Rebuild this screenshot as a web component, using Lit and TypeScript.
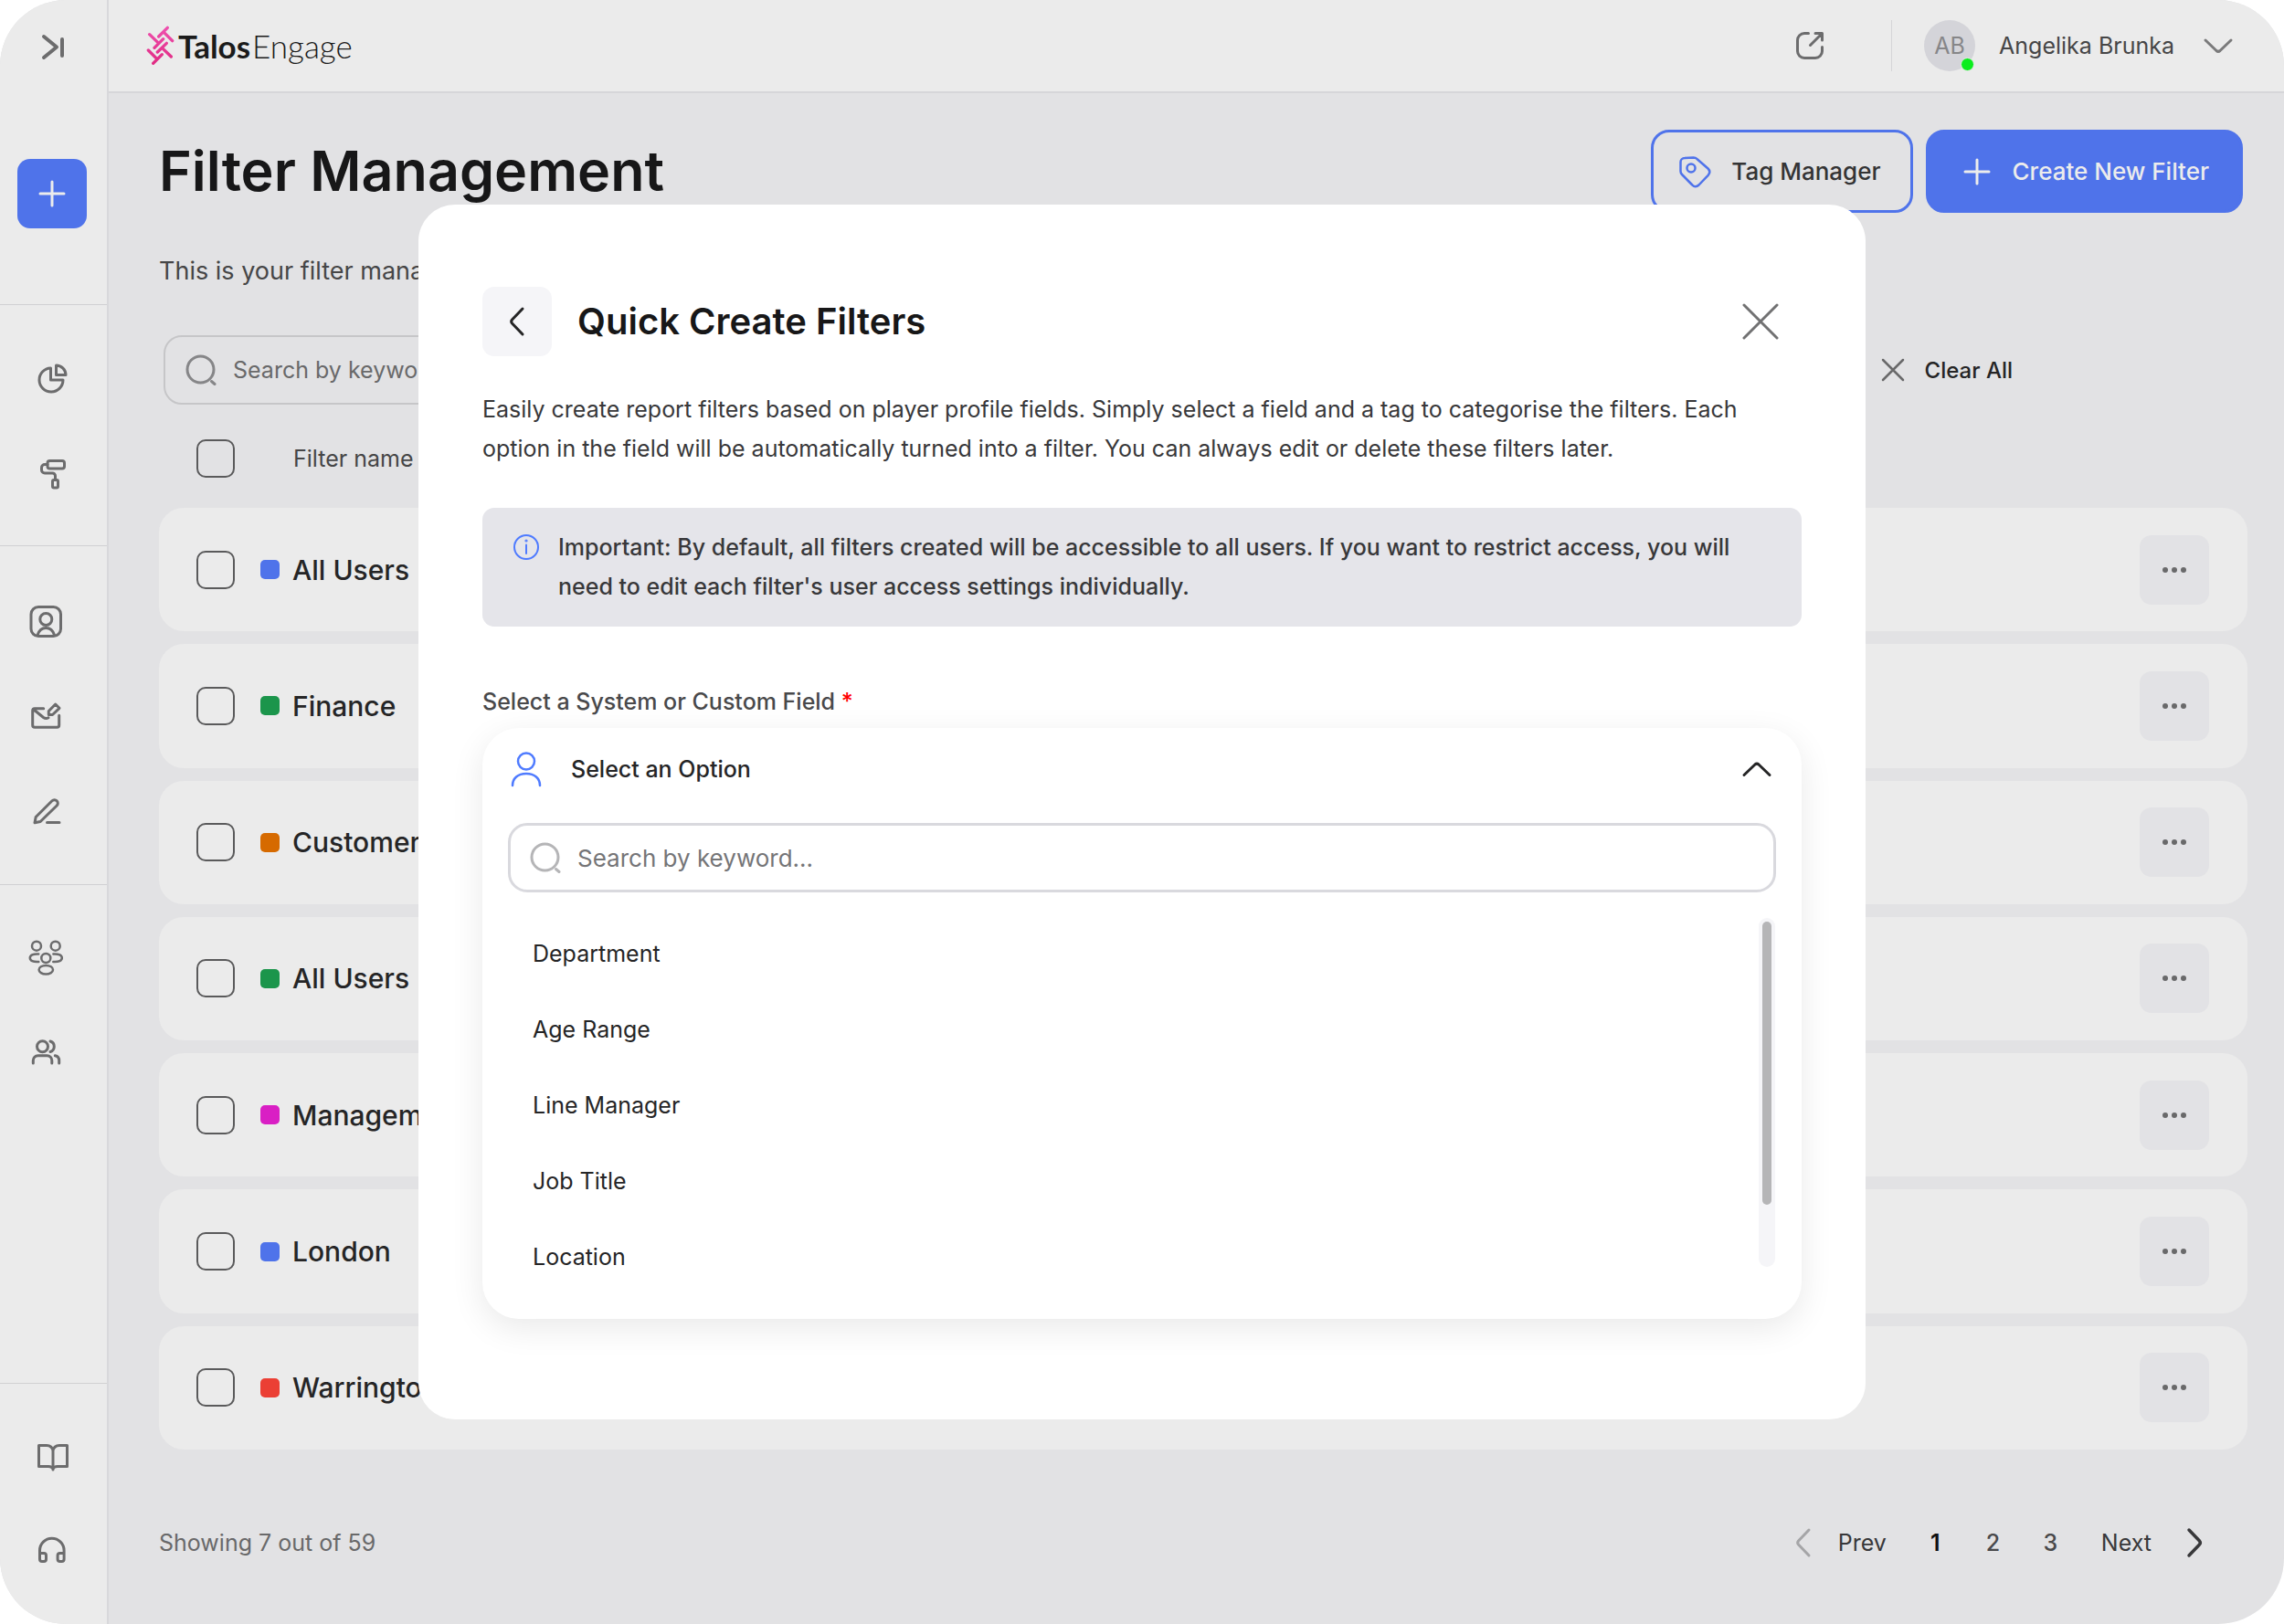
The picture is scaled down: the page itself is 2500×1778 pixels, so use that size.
import { LitElement, html, svg, css, TemplateResult, SVGTemplateResult } from "lit";
import { customElement, property, state } from "lit/decorators.js";
import { classMap } from "lit/directives/class-map.js";

interface IconDef {
  w: number;
  h: number;
  stroke: number;
  body: SVGTemplateResult;
}

const icons: Record<string, IconDef> = {
  collapse: { w: 40, h: 40, stroke: 4, body: svg`<path d="M11 8 25 19.500 11 31M31 11V29"/>` },
  plus: { w: 30, h: 30, stroke: 3, body: svg`<path d="M15 2V28M2 15H28"/>` },
  pie: {
    w: 40, h: 40, stroke: 3,
    body: svg`<path d="M18.5 9A13 13 0 1 0 32 22H18.5Z"/><path d="M24.5 6v10.500H35A10.500 10.500 0 0 0 24.500 6Z"/>`,
  },
  roller: {
    w: 40, h: 40, stroke: 3,
    body: svg`<rect x="15" y="6.500" width="18.500" height="8.500" rx="2.500"/><path d="M15 10.500H12a3.500 3.500 0 0 0-3.500 3.500v2.500a3.500 3.500 0 0 0 3.500 3.500h8.500a3 3 0 0 1 3 3v4"/><rect x="20.500" y="27.500" width="6" height="8.500" rx="1.500"/>`,
  },
  profile: {
    w: 40, h: 40, stroke: 3,
    body: svg`<rect x="4" y="4.500" width="32.500" height="32" rx="8"/><circle cx="20.300" cy="18" r="6.500"/><path d="M11 35.500c1.500-5 5-8 9.300-8s7.800 3 9.300 8"/>`,
  },
  mail: {
    w: 40, h: 40, stroke: 3,
    body: svg`<path d="M17.700 11.700H8a2.300 2.300 0 0 0-2.300 2.300V30A2.300 2.300 0 0 0 8 32.300H32.400A2.300 2.300 0 0 0 34.700 30V19.300M6.500 12.500 17.500 21.500c2 1.500 3.500 1.500 5.500.3M30.700 7 35 11.300 27.500 18.500H23.300V14.500Z"/>`,
  },
  pen: {
    w: 40, h: 40, stroke: 3,
    body: svg`<path d="M8 32.700 9.200 26.500 27 8.800a3.600 3.600 0 0 1 5.200 5.200L14.200 31.500ZM21.500 32.500H35"/>`,
  },
  group: {
    w: 40, h: 40, stroke: 2.5,
    body: svg`<circle cx="10" cy="7.700" r="5"/><circle cx="30.700" cy="7.700" r="5"/><circle cx="20.300" cy="21" r="5"/><ellipse cx="20.300" cy="33.700" rx="7.700" ry="4.800"/><path d="M12.300 16.500C6 16 2.800 18 2.800 20.800S6 25.500 12.300 25M28.300 16.500c6.300-.5 9.500 1.500 9.500 4.300s-3.200 4.700-9.500 4.200"/>`,
  },
  users: {
    w: 40, h: 40, stroke: 3,
    body: svg`<circle cx="16.500" cy="13.700" r="6"/><path d="M25 8a6 6 0 0 1 0 11.500M6.300 32V29a5.300 5.300 0 0 1 5.300-5.300H21.500A5.300 5.300 0 0 1 26.800 29V32M30.300 23.800A5.500 5.500 0 0 1 34.700 29.200V32"/>`,
  },
  book: {
    w: 40, h: 40, stroke: 3,
    body: svg`<path d="M5.500 7.500H14A7 6 0 0 1 21 13.500V34A5 3.500 0 0 0 16 30.500H5.500ZM36.500 7.500H28A7 6 0 0 0 21 13.500V34A5 3.500 0 0 1 26 30.500H36.500Z"/>`,
  },
  headphones: {
    w: 40, h: 40, stroke: 3,
    body: svg`<path d="M6.500 24V20.500a13.300 13.300 0 0 1 26.600 0V24M6.500 23.500h4.500a2.500 2.500 0 0 1 2.500 2.500v4a2.500 2.500 0 0 1-2.500 2.500H9a2.500 2.500 0 0 1-2.500-2.500ZM33.100 23.500h-4.500a2.500 2.500 0 0 0-2.500 2.500v4a2.500 2.500 0 0 0 2.500 2.500h2a2.500 2.500 0 0 0 2.500-2.500Z"/>`,
  },
  external: {
    w: 40, h: 40, stroke: 3,
    body: svg`<path d="M18.500 6.500H14A7.500 7.500 0 0 0 6.500 14V26A7.500 7.500 0 0 0 14 33.500H26A7.500 7.500 0 0 0 33.500 26V21.500M20.500 19.500 33 7M26 6.500H33.500V14"/>`,
  },
  tag: {
    w: 36, h: 36, stroke: 2.5,
    body: svg`<path d="M2.500 7.500A4.500 4.500 0 0 1 7 3L16.500 2.500c1.800 0 3 .6 4.200 1.700L32.500 14.500c2.400 2.400 2.400 4.800.2 7.300L22.500 32.500c-2.400 2.400-5 2.400-7.200 0L4 21c-1-1-1.500-2-1.500-3.400Z"/><circle cx="14" cy="14" r="4.500"/>`,
  },
  close: { w: 40, h: 40, stroke: 3, body: svg`<path d="M2 2 38 38M38 2 2 38"/>` },
  closeSmall: { w: 26, h: 26, stroke: 2.5, body: svg`<path d="M2 2 24 24M24 2 2 24"/>` },
  search: { w: 34, h: 34, stroke: 3, body: svg`<circle cx="16.500" cy="16.500" r="14.500"/><path d="M28.500 29.500 32 32.500"/>` },
  chevronLeft: { w: 20, h: 34, stroke: 3, body: svg`<path d="M16 3 4.500 15c-1 1.200-1 2.800 0 4L16 31"/>` },
  chevronRight: { w: 20, h: 34, stroke: 3.5, body: svg`<path d="M4 3 15.500 15c1 1.200 1 2.800 0 4L4 31"/>` },
  chevronDown: { w: 34, h: 20, stroke: 3, body: svg`<path d="M3 4 15 15.500c1.200 1 2.800 1 4 0L31 4"/>` },
  chevronUp: { w: 34, h: 20, stroke: 3, body: svg`<path d="M3 16.500 15 5c1.200-1 2.800-1 4 0L31 16.500"/>` },
  info: { w: 30, h: 30, stroke: 2, body: svg`<circle cx="15" cy="15" r="13"/><path d="M15 12.500V22"/><circle cx="15" cy="8" r=".6"/>` },
  user: { w: 36, h: 40, stroke: 2.5, body: svg`<circle cx="17" cy="11.500" r="9"/><path d="M2 38c0-8 6-13 15-13s15 5 15 13"/>` },
  dots: {
    w: 30, h: 10, stroke: 0,
    body: svg`<g fill="currentColor"><circle cx="5" cy="5" r="3"/><circle cx="15" cy="5" r="3"/><circle cx="25" cy="5" r="3"/></g>`,
  },
};

function icon(name: string): TemplateResult {
  const i = icons[name];
  return html`<svg class="icon" width=${i.w} height=${i.h} viewBox="0 0 ${i.w} ${i.h}" fill="none" stroke="currentColor"
    stroke-width=${i.stroke} stroke-linecap="round" stroke-linejoin="round" aria-hidden="true">${i.body}</svg>`;
}

const base = css`
  * {
    box-sizing: border-box;
  }
  h1, h2, p, ul {
    margin: 0;
    padding: 0;
  }
  ul {
    list-style: none;
  }
  button, input {
    font: inherit;
    color: inherit;
    border: 0;
    background: none;
    padding: 0;
    margin: 0;
  }
  button {
    display: inline-flex;
    align-items: center;
    justify-content: center;
    cursor: pointer;
  }
  .icon {
    display: block;
    flex: none;
  }
`;

@customElement("side-nav")
export class SideNav extends LitElement {
  static styles = [base, css`
    :host {
      display: flex;
      flex-direction: column;
      width: 119px;
      flex: none;
      background: #ebebeb;
      border-right: 2px solid #d8d8db;
      color: #6c6c6d;
    }
    .section {
      display: flex;
      flex-direction: column;
      gap: 64px;
      padding: 60px 39px 59px 37px;
      border-bottom: 1px solid #d0d0d2;
    }
    .top {
      padding: 32px 20px 83px 19px;
      gap: 102px;
    }
    .top .link {
      margin-left: 18px;
    }
    .inset {
      padding: 62px 39px 60px 30px;
    }
    .grow {
      flex: 1;
      padding-top: 59px;
    }
    .last {
      border-bottom: 0;
      gap: 62px;
      padding-bottom: 61px;
    }
    .link {
      width: 40px;
      height: 40px;
    }
    .add {
      width: 76px;
      height: 76px;
      border-radius: 14px;
      background: #4f73ea;
      color: #ececec;
    }
  `];

  private links(items: [string, string][]) {
    return items.map(([name, label]) => html`<button class="link" aria-label=${label}>${icon(name)}</button>`);
  }

  render() {
    return html`
      <div class="section top">
        <button class="link" aria-label="Expand menu">${icon("collapse")}</button>
        <button class="add" aria-label="Create">${icon("plus")}</button>
      </div>
      <div class="section">${this.links([["pie", "Reports"], ["roller", "Branding"]])}</div>
      <div class="section inset">${this.links([["profile", "Profile"], ["mail", "Messages"], ["pen", "Edit"]])}</div>
      <div class="section inset grow">${this.links([["group", "Groups"], ["users", "Users"]])}</div>
      <div class="section last">${this.links([["book", "Guides"], ["headphones", "Support"]])}</div>
    `;
  }
}

@customElement("top-bar")
export class TopBar extends LitElement {
  static styles = [base, css`
    :host {
      display: flex;
      align-items: center;
      justify-content: space-between;
      height: 102px;
      padding: 0 55px 0 41px;
      background: #ebebeb;
      border-bottom: 2px solid #d6d6d9;
    }
    .brand {
      display: flex;
      align-items: center;
      gap: 4px;
      color: #1b1b1b;
      font: 700 35px/44px Lato, sans-serif;
      text-decoration: none;
    }
    .light {
      font-weight: 300;
      margin-left: 2px;
    }
    .right {
      display: flex;
      align-items: center;
      color: #6c6c6d;
    }
    .rule {
      width: 1px;
      height: 56px;
      margin: 0 35px 0 69px;
      background: #d5d5d8;
    }
    .avatar {
      position: relative;
      width: 56px;
      height: 56px;
      border-radius: 50%;
      background: #d4d4d9;
      color: #868688;
      line-height: 56px;
      text-align: center;
    }
    .dot {
      position: absolute;
      right: 1px;
      bottom: 0;
      width: 15px;
      height: 15px;
      border: 1px solid #ebebeb;
      border-radius: 50%;
      background: #0ced1e;
    }
    .user {
      gap: 26px;
      color: #464647;
      font-size: 25px;
    }
    .user > .icon {
      margin-left: 5px;
      color: #7a7a7b;
    }
  `];

  render() {
    return html`
      <a class="brand" href="#home">
        <svg class="icon" width="31" height="44" viewBox="59 54 93 132" fill="none" stroke-width="10" stroke-linecap="round" aria-hidden="true">
          <defs>
            <linearGradient id="pink" gradientUnits="userSpaceOnUse" x1="0" y1="60" x2="0" y2="180">
              <stop offset="0" stop-color="#ee4fae" />
              <stop offset="1" stop-color="#e02a82" />
            </linearGradient>
          </defs>
          <path stroke="url(#pink)" d="M129 61 100 90M117 76 145 104M70 83 100 112M115 98 86 127M82 178 111 149M94 163 66 135M141 156 111 127M96 141 126 112" />
        </svg>
        <span>Talos<span class="light">Engage</span></span>
      </a>
      <div class="right">
        <button aria-label="Open site">${icon("external")}</button>
        <span class="rule"></span>
        <button class="user">
          <span class="avatar">AB<span class="dot"></span></span>
          Angelika Brunka ${icon("chevronDown")}
        </button>
      </div>
    `;
  }
}

interface Filter {
  name: string;
  color: string;
}

@customElement("filter-table")
export class FilterTable extends LitElement {
  @property({ attribute: false }) filters: Filter[] = [];

  static styles = [base, css`
    :host {
      display: flex;
      flex: 1;
    }
    .table, .body {
      display: flex;
      flex-direction: column;
      flex: 1;
    }
    .body {
      gap: 14px;
    }
    .head, .row {
      display: flex;
      align-items: center;
    }
    .head {
      padding: 0 41px;
      margin: 38px 0 33px;
      color: #464647;
      font-size: 25px;
    }
    .row {
      flex: 1;
      min-height: 100px;
      padding: 0 42px 0 41px;
      border-radius: 27px;
      background: #ebebeb;
      font-weight: 500;
      font-size: 30px;
      color: #252526;
    }
    .cell {
      display: flex;
      align-items: center;
      padding: 0;
    }
    .name {
      flex: 1;
      gap: 14px;
      margin-left: 28px;
    }
    .head .name {
      margin-left: 64px;
      font-weight: 400;
    }
    .check {
      appearance: none;
      width: 42px;
      height: 42px;
      border: 2px solid #5a5a5b;
      border-radius: 10px;
    }
    .swatch {
      width: 21px;
      height: 21px;
      border-radius: 5px;
    }
    .more {
      width: 76px;
      height: 76px;
      border-radius: 13px;
      background: #e2e2e5;
      color: #69696a;
    }
  `];

  render() {
    return html`
      <table class="table">
        <thead>
          <tr class="head">
            <th class="cell"><input class="check" type="checkbox" aria-label="Select all filters" /></th>
            <th class="cell name">Filter name</th>
          </tr>
        </thead>
        <tbody class="body">
          ${this.filters.map((f) => html`
            <tr class="row">
              <td class="cell"><input class="check" type="checkbox" aria-label=${f.name} /></td>
              <td class="cell name"><span class="swatch" style="background:${f.color}"></span>${f.name}</td>
              <td class="cell"><button class="more" aria-label="More actions">${icon("dots")}</button></td>
            </tr>`)}
        </tbody>
      </table>
    `;
  }
}

@customElement("quick-create")
export class QuickCreate extends LitElement {
  @state() private open = true;
  private options = ["Department", "Age Range", "Line Manager", "Job Title", "Location"];

  static styles = [base, css`
    :host {
      display: block;
      width: 1584px;
      max-width: 94%;
      padding: 90px 70px 110px;
      border-radius: 40px;
      background: #fff;
      font-size: 25px;
      color: #38383a;
    }
    .head {
      display: flex;
      align-items: center;
      gap: 28px;
    }
    .title {
      flex: 1;
      font-weight: 600;
      font-size: 40px;
      line-height: 48px;
      color: #171718;
    }
    .back {
      width: 76px;
      height: 76px;
      border-radius: 13px;
      background: #f5f5f8;
      color: #252526;
    }
    .close {
      margin-right: 25px;
      color: #717172;
    }
    .intro {
      margin-top: 37px;
      line-height: 43px;
    }
    .notice {
      display: flex;
      gap: 20px;
      margin-top: 43px;
      padding: 22px 60px 22px 33px;
      border-radius: 13px;
      background: #e5e5ea;
      font-weight: 500;
      line-height: 43px;
    }
    .notice .icon {
      margin-top: 6px;
      color: #4f7bff;
    }
    .label {
      display: block;
      margin: 62px 0 9px;
      font-weight: 500;
      line-height: 40px;
      color: #49494b;
    }
    .required {
      color: #ff0000;
    }
    .select {
      padding: 0 28px 26px;
      border-radius: 40px;
      background: #fff;
      box-shadow: 0 10px 36px rgba(0, 0, 0, 0.09);
      color: #252526;
    }
    .current {
      display: flex;
      width: 100%;
      height: 90px;
      padding: 0 4px 0 3px;
      gap: 30px;
      font-weight: 500;
    }
    .current .value {
      flex: 1;
      text-align: left;
    }
    .current .icon:first-child {
      color: #4f7bff;
    }
    .search {
      display: flex;
      align-items: center;
      gap: 18px;
      height: 76px;
      margin: 14px 0 26px;
      padding: 0 21px;
      border: 3px solid #d9d9de;
      border-radius: 21px;
      color: #b5b5b7;
    }
    .field {
      flex: 1;
      min-width: 0;
      font-size: 26px;
      outline: 0;
      color: #38383a;
    }
    .field::placeholder {
      color: #757577;
      opacity: 1;
    }
    .scroller {
      display: flex;
    }
    .options {
      flex: 1;
    }
    .option {
      padding-left: 27px;
      line-height: 83px;
    }
    .track {
      width: 18px;
      margin: 2px 1px 31px;
      padding: 4px;
      border-radius: 9px;
      background: #f5f5f8;
    }
    .thumb {
      height: 83%;
      border-radius: 5px;
      background: #b5b5b7;
    }
  `];

  render() {
    return html`
      <div class="head">
        <button class="back" aria-label="Back">${icon("chevronLeft")}</button>
        <h2 class="title">Quick Create Filters</h2>
        <button class="close" aria-label="Close">${icon("close")}</button>
      </div>
      <p class="intro">Easily create report filters based on player profile fields. Simply select a field and a tag to categorise the filters. Each option in the field will be automatically turned into a filter. You can always edit or delete these filters later.</p>
      <div class="notice">
        ${icon("info")}
        <p>Important: By default, all filters created will be accessible to all users. If you want to restrict access, you will need to edit each filter's user access settings individually.</p>
      </div>
      <label class="label" for="field">Select a System or Custom Field <span class="required">*</span></label>
      <div class="select">
        <button class="current" id="field" aria-expanded=${this.open} @click=${() => (this.open = !this.open)}>
          ${icon("user")}<span class="value">Select an Option</span>${icon(this.open ? "chevronUp" : "chevronDown")}
        </button>
        ${this.open ? html`
          <label class="search">
            ${icon("search")}
            <input class="field" type="text" placeholder="Search by keyword..." aria-label="Search fields" />
          </label>
          <div class="scroller">
            <ul class="options" role="listbox">
              ${this.options.map((o) => html`<li class="option" role="option">${o}</li>`)}
            </ul>
            <div class="track"><div class="thumb"></div></div>
          </div>` : ""}
      </div>
    `;
  }
}

@customElement("app-root")
export class AppRoot extends LitElement {
  @state() private page = 1;

  private filters: Filter[] = [
    { name: "All Users Department", color: "#4f73ea" },
    { name: "Finance", color: "#1b954b" },
    { name: "Customer Service", color: "#d66a00" },
    { name: "All Users Department", color: "#1b954b" },
    { name: "Management", color: "#d91fc4" },
    { name: "London", color: "#4f73ea" },
    { name: "Warrington", color: "#eb3f34" },
  ];

  static styles = [base, css`
    :host {
      display: block;
      background: #fff;
      font-family: Inter, "Liberation Sans", sans-serif;
      font-optical-sizing: none;
    }
    .shell {
      position: relative;
      display: flex;
      min-height: 100vh;
      border-radius: 72px;
      overflow: hidden;
      background: #e2e2e4;
    }
    .main {
      display: flex;
      flex-direction: column;
      flex: 1;
      min-width: 0;
    }
    .content {
      display: flex;
      flex-direction: column;
      flex: 1;
      padding: 40px 40px 69px 55px;
    }
    .heading {
      display: flex;
      align-items: center;
      gap: 14px;
      padding-right: 5px;
    }
    .title {
      flex: 1;
      padding-bottom: 2px;
      font-weight: 600;
      font-size: 61px;
      line-height: 72px;
      color: #171718;
    }
    .action {
      gap: 22px;
      height: 91px;
      padding: 0 32px 0 27px;
      border: 3px solid #4f73ea;
      border-radius: 20px;
      font-weight: 500;
      font-size: 26px;
      color: #343435;
    }
    .action .icon {
      color: #4f73ea;
    }
    .primary {
      gap: 24px;
      padding: 0 34px 0 38px;
      background: #4f73ea;
      color: #ececec;
    }
    .primary .icon {
      color: #ececec;
    }
    .lead {
      margin-top: 44px;
      font-size: 27px;
      line-height: 40px;
      color: #464647;
    }
    .toolbar {
      display: flex;
      align-items: center;
      gap: 32px;
      margin-top: 50px;
      padding: 0 257px 0 5px;
    }
    .search {
      display: flex;
      flex: 1;
      align-items: center;
      gap: 18px;
      height: 76px;
      padding: 0 22px;
      border: 2px solid #c6c6c8;
      border-radius: 20px;
      color: #868688;
    }
    .field {
      flex: 1;
      min-width: 0;
      font-size: 25px;
      outline: 0;
    }
    .field::placeholder {
      color: #69696a;
      opacity: 1;
    }
    .clear {
      gap: 22px;
      font-weight: 500;
      font-size: 24px;
      color: #252526;
    }
    .clear .icon {
      color: #69696a;
    }
    .footer {
      display: flex;
      align-items: center;
      justify-content: space-between;
      margin-top: 82px;
      padding-right: 48px;
      font-size: 25px;
      line-height: 40px;
      color: #69696a;
    }
    .pager {
      display: flex;
      align-items: center;
      color: #38383a;
    }
    .step {
      gap: 28px;
    }
    .previous .icon {
      color: #a5a5a7;
    }
    .next {
      gap: 37px;
    }
    .pages {
      display: flex;
      margin: 0 24px 0 22px;
    }
    .page {
      width: 63px;
      font-weight: 500;
      color: #49494b;
    }
    .on {
      font-weight: 600;
      color: #111112;
    }
    .overlay {
      position: absolute;
      inset: 0;
      display: flex;
      align-items: center;
      justify-content: center;
    }
  `];

  render() {
    return html`
      <div class="shell">
        <side-nav></side-nav>
        <div class="main">
          <top-bar></top-bar>
          <main class="content">
            <div class="heading">
              <h1 class="title">Filter Management</h1>
              <button class="action">${icon("tag")}Tag Manager</button>
              <button class="action primary">${icon("plus")}Create New Filter</button>
            </div>
            <p class="lead">This is your filter management area.</p>
            <div class="toolbar">
              <label class="search">
                ${icon("search")}
                <input class="field" type="text" placeholder="Search by keyword..." aria-label="Search filters" />
              </label>
              <button class="clear">${icon("closeSmall")}Clear All</button>
            </div>
            <filter-table .filters=${this.filters}></filter-table>
            <div class="footer">
              <span>Showing 7 out of 59</span>
              <nav class="pager" aria-label="Pages">
                <button class="step previous">${icon("chevronLeft")}Prev</button>
                <div class="pages">
                  ${[1, 2, 3].map((n) => html`
                    <button class=${classMap({ page: true, on: n === this.page })} @click=${() => (this.page = n)}>${n}</button>`)}
                </div>
                <button class="step next">Next${icon("chevronRight")}</button>
              </nav>
            </div>
          </main>
        </div>
        <div class="overlay"><quick-create role="dialog" aria-label="Quick Create Filters"></quick-create></div>
      </div>
    `;
  }
}
